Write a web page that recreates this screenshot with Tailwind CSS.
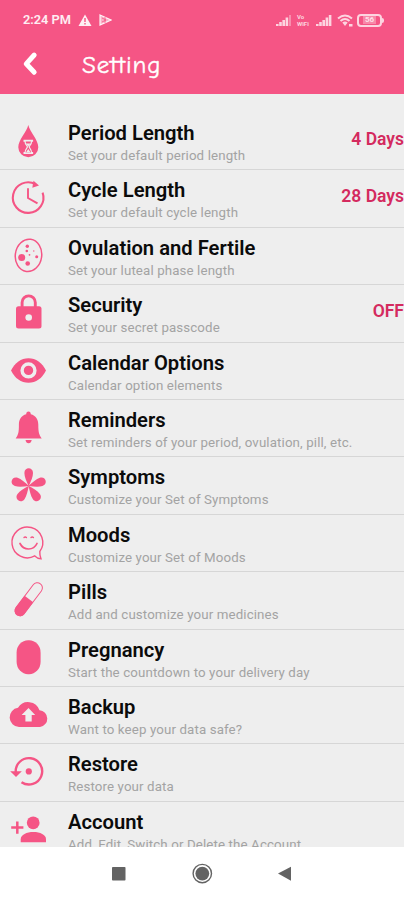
<!DOCTYPE html>
<html lang="en">
<head>
<meta charset="utf-8">
<title>Setting</title>
<script src="https://cdn.jsdelivr.net/npm/@tailwindcss/browser@4"></script>
</head>
<body class="w-[404px] h-[900px] overflow-hidden bg-[#eeeeee] font-['Roboto',sans-serif] flex flex-col">
<header class="h-[94px] shrink-0 bg-[#f55585] text-white">
  <div class="h-10 flex items-center justify-between pl-[23px] pr-[20px] text-white/90">
    <div class="flex items-center">
      <span class="text-[12.8px] font-semibold w-[49px] whitespace-nowrap">2:24 PM</span>
      <svg class="ml-[6px]" width="14" height="12" viewBox="0 0 14 12"><path d="M7 .5 13.5 12H.5Z" fill="currentColor"/><path d="M7 4v4M7 9v1.5" stroke="#f55585" stroke-width="1.4"/></svg>
      <svg class="ml-[7px]" width="13" height="12" viewBox="0 0 13 12"><path d="M1 1 12 6 1 11Z" fill="currentColor" fill-opacity=".6" stroke="currentColor" stroke-width="1.2"/><path d="M3 4l4 2-4 2M6 3v6" fill="none" stroke="#f55585" stroke-width=".8"/></svg>
    </div>
    <div class="flex items-center text-white/75">
      <svg width="16" height="12" viewBox="0 0 16 12" fill="currentColor"><path d="M0 10h2.600v2H0zM3.200 8h2.600v4H3.200zM6.400 6h2.600v6H6.400zM9.600 3.500h2.600V12H9.600z"/><path d="M13 1h2v11h-2z" opacity=".45"/></svg>
      <div class="ml-[5px] w-[15px] text-[6px] leading-[7px] font-bold"><div>Vo</div><div>WiFi</div></div>
      <svg class="ml-[4px]" width="16" height="12" viewBox="0 0 16 12" fill="currentColor"><path d="M0 10h2.600v2H0zM3.200 8h2.600v4H3.200zM6.400 6h2.600v6H6.400zM9.600 3.500h2.600V12H9.600zM12.800 1h2.600v11h-2.600z"/></svg>
      <svg class="ml-[5px]" width="17" height="13" viewBox="0 0 17 13"><path d="M1 4.500Q8 -1.500 15 4.500M3.500 7Q8 3 12.500 7" fill="none" stroke="currentColor" stroke-width="2"/><path d="M5.300 8.600Q8 6.500 10.700 8.600L8 12ZM12 10h3.500v2.500H12z" fill="currentColor"/></svg>
      <div class="ml-[3px] w-[25px] h-[13px] border-2 border-current rounded-[4px] flex items-center justify-center text-[8px] leading-none font-bold"><span class="bg-white/30 px-[2px]">56</span></div>
      <div class="w-[2px] h-[5px] bg-white/75 rounded-r"></div>
    </div>
  </div>
  <div class="h-[48px] flex items-center">
    <svg class="ml-[22px]" width="16" height="26" viewBox="0 0 16 26"><path d="M12.200 4 4.200 12.800l8 8.500" fill="none" stroke="#fff" stroke-width="4.900" stroke-linecap="round" stroke-linejoin="round"/></svg>
    <h1 class="ml-[44px] text-[25px] leading-none tracking-[0.85px] [font-variant-ligatures:none] [-webkit-text-stroke:0.4px_white] font-['Comic_Neue','Comic_Sans_MS','Lato',sans-serif]">Setting</h1>
  </div>
</header>
<main id="list" class="h-[753px] shrink-0 overflow-hidden pt-[19px] text-[#f55585]"></main>
<nav class="flex-1 bg-white flex items-start justify-center pt-[16px] text-[#636363]">
  <svg width="180" height="22" viewBox="0 0 180 22" fill="currentColor"><rect x="0" y="4" width="13.500" height="13.500" rx=".8"/><circle cx="90.300" cy="10.600" r="9.200" fill="none" stroke="currentColor" stroke-width="1.400"/><circle cx="90.300" cy="10.600" r="6.900"/><path d="M166 10.600 179 3.700v14Z"/></svg>
</nav>
<script>
const rows = [
 ['Period Length','Set your default period length','4 Days','<path d="M28.300 13C30 20 38.300 28 38.300 35.200a10 10 0 0 1-20 0C18.300 28 26.600 20 28.300 13Z" fill="currentColor"/><path d="M23.500 28.700h9.600M23.500 41h9.600" stroke="#eee" stroke-width="1.900"/><path d="M25 29c0 4 2.400 4.300 2.400 5.800S25 37 25 41h6.600c0-4-2.400-4.700-2.400-6.200S31.600 33 31.600 29Z" fill="#f55585" stroke="#eee" stroke-width="1.200"/><path d="M26 40.500 28.300 37 30.600 40.500Z M26 31.500h4.600l-2.300 3Z" fill="#eee"/>'],
 ['Cycle Length','Set your default cycle length','28 Days','<path d="M35.500 15.200A15.300 15.300 0 1 0 42.600 23.600" fill="none" stroke="currentColor" stroke-width="2.100"/><path d="M33.500 11.800 39 16.600 32.300 18.700Z" fill="currentColor"/><path d="M28 19.300V29l9.500 5.300" fill="none" stroke="currentColor" stroke-width="1.900"/>'],
 ['Ovulation and Fertile','Set your luteal phase length','','<ellipse cx="28.500" cy="28.400" rx="13.200" ry="16.200" transform="rotate(8 28.500 28.400)" fill="none" stroke="currentColor" stroke-width="1.500"/><g fill="currentColor"><circle cx="21.700" cy="30.500" r="3.500"/><circle cx="27.700" cy="36.500" r="2.300"/><circle cx="27.300" cy="19.300" r="1.700"/><circle cx="36.700" cy="29.700" r="1.500"/><circle cx="29.500" cy="27.800" r=".9"/><circle cx="26.800" cy="24" r="1.300"/><circle cx="33.800" cy="24" r=".7"/></g>'],
 ['Security','Set your secret passcode','OFF','<path d="M22.100 24v-5.500a6.600 6.600 0 0 1 13.200 0V24" fill="none" stroke="currentColor" stroke-width="2.900"/><rect x="16" y="22.300" width="25.500" height="22.300" rx="2.500" fill="currentColor"/><circle cx="28.700" cy="33.500" r="3.300" fill="#eee"/>'],
 ['Calendar Options','Calendar option elements','','<path d="M11 28.500C15 20.500 21 16.200 28.500 16.200S42 20.500 46 28.500C42 36.500 36 40.700 28.500 40.700S15 36.500 11 28.500Z" fill="currentColor"/><circle cx="28.500" cy="28.400" r="6.400" fill="none" stroke="#eee" stroke-width="3.400"/>'],
 ['Reminders','Set reminders of your period, ovulation, pill, etc.','','<path d="M28.500 12.500c1.600 0 2.300 1.100 2.300 2.800 5 1.300 7.500 5.300 7.500 10.500 0 7.200.7 9.900 3.400 13.700H15.700c2.700-3.800 3.200-6.500 3.200-13.700 0-5.200 2.400-9.200 7.300-10.500 0-1.700.7-2.800 2.300-2.800ZM25.500 41h6.200c-.3 2-1.500 3.300-3.100 3.300S25.800 43 25.500 41Z" fill="currentColor"/>'],
 ['Symptoms','Customize your Set of Symptoms','','<g fill="currentColor"><path id="petal" d="M28.700 30.300C26.400 25 24.400 20.800 24.400 16.900c0-6.200 8.600-6.200 8.600 0 0 3.900-2 8.100-4.300 13.400Z"/><use href="#petal" transform="rotate(72 28.700 30)"/><use href="#petal" transform="rotate(144 28.700 30)"/><use href="#petal" transform="rotate(216 28.700 30)"/><use href="#petal" transform="rotate(288 28.700 30)"/></g>'],
 ['Moods','Customize your Set of Moods','','<g fill="none" stroke="currentColor" stroke-width="1.400" stroke-linecap="round"><path d="M39.800 37.500c-.2 3 .3 5 1.200 7.300-2.600-.2-4.500-1.200-6.200-2.900A15.400 15.400 0 1 1 39.800 37.500Z"/><path d="M20 29.500c3.700 7.300 13.500 7.300 17 0" stroke-width="1.700"/><path d="M24 23.600q1.200-1.200 2.400 0M31 23.600q1.200-1.200 2.400 0"/></g>'],
 ['Pills','Add and customize your medicines','','<g transform="rotate(37 28.700 28.300)"><rect x="23.600" y="8.900" width="10.200" height="38.800" rx="5.100" fill="none" stroke="currentColor" stroke-width="1"/><path d="M23.300 28h10.800v14.700a5.400 5.400 0 0 1-10.800 0Z" fill="currentColor"/></g>'],
 ['Pregnancy','Start the countdown to your delivery day','','<rect x="16.600" y="11.200" width="24" height="34" rx="11.500" ry="12.500" fill="currentColor"/>'],
 ['Backup','Want to keep your data safe?','','<path d="M19 41a9.700 9.700 0 0 1-1-19.300A12 12 0 0 1 39.500 24.300a8.400 8.400 0 0 1 .5 16.700Z" fill="currentColor"/><path d="M28.500 22 35.200 29H31.700v6.500h-6.300V29H21.600Z" fill="#eee"/>'],
 ['Restore','Restore your data','','<path d="M15.800 29.500A13.200 13.200 0 1 1 21.500 39.200" fill="none" stroke="currentColor" stroke-width="2.400"/><path d="M10.200 28.300H21.800L16 34Z" fill="currentColor"/><circle cx="28.800" cy="28.400" r="3.100" fill="currentColor"/>'],
 ['Account','Add, Edit, Switch or Delete the Account','','<circle cx="33.200" cy="21.800" r="6.400" fill="currentColor"/><path d="M20.700 41.300v-3c0-4.500 6-7.200 12.700-7.200S46 33.800 46 38.300v3Z" fill="currentColor"/><path d="M17.300 20.500v12.200M11.200 26.600h12.200" stroke="currentColor" stroke-width="2.500"/>']
];
document.getElementById('list').innerHTML = rows.map(([title, sub, value, icon]) => `
<section class="h-[57.4px] flex border-b border-[#d6d6d6]">
  <svg class="shrink-0 -mt-px" width="56" height="57" viewBox="0 0 56 57">${icon}</svg>
  <div class="ml-3 flex-1 pt-[8px] whitespace-nowrap">
    <h2 class="text-[20.2px] leading-[24px] font-semibold text-[#0b0b0b]">${title}</h2>
    <p class="mt-[3px] text-[13.3px] leading-[16px] tracking-[0.12px] text-[#a3a3a3]">${sub}</p>
  </div>
  <div class="pt-[16px] text-[17.5px] leading-[20px] font-semibold text-[#d42a5e] whitespace-nowrap">${value}</div>
</section>`).join('');
</script>
</body>
</html>
